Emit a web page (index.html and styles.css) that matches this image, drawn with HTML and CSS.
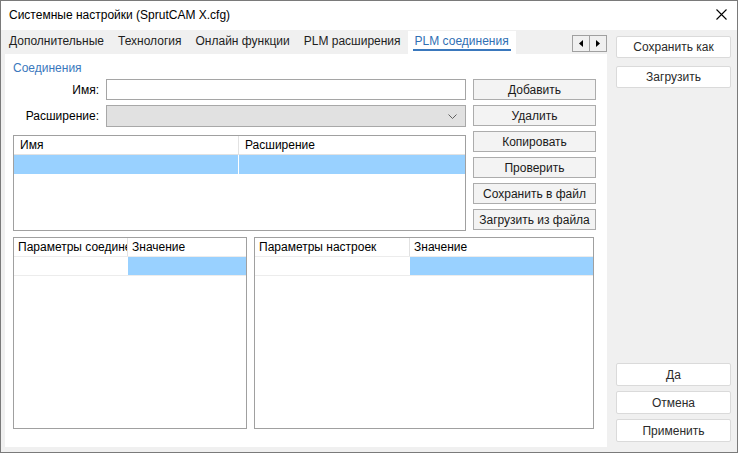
FILE: index.html
```html
<!DOCTYPE html>
<html lang="ru">
<head>
    <meta charset="UTF-8">
    <meta name="viewport" content="width=device-width, initial-scale=1.0">
    <title>Системные настройки</title>
    <link rel="stylesheet" href="styles.css">
</head>
<body>
    <div class="window">
        <div class="titlebar">
            <span class="title">Системные настройки (SprutCAM X.cfg)</span>
            <svg class="close-icon" width="11" height="11" viewBox="0 0 11 11">
                <path d="M0.5 0.5 L10.5 10.5 M10.5 0.5 L0.5 10.5" stroke="#000" stroke-width="1.1" fill="none"/>
            </svg>
        </div>

        <div class="content">
            <div class="main">
                <div class="tabbar">
                    <div class="tab"><span>Дополнительные</span></div>
                    <div class="tab"><span>Технология</span></div>
                    <div class="tab"><span>Онлайн функции</span></div>
                    <div class="tab"><span>PLM расширения</span></div>
                    <div class="tab active"><span>PLM соединения</span></div>
                    <div class="tab-scroll">
                        <button class="scroll-btn">
                            <svg width="4" height="7" viewBox="0 0 4 7"><path d="M4 0 L0 3.5 L4 7 Z" fill="#000"/></svg>
                        </button>
                        <button class="scroll-btn">
                            <svg width="4" height="7" viewBox="0 0 4 7"><path d="M0 0 L4 3.5 L0 7 Z" fill="#000"/></svg>
                        </button>
                    </div>
                </div>

                <div class="panel">
                    <div class="group-title">Соединения</div>

                    <div class="top-section">
                        <div class="form-side">
                            <div class="form-row">
                                <label class="form-label">Имя:</label>
                                <div class="text-input"></div>
                            </div>
                            <div class="form-row combo-row">
                                <label class="form-label">Расширение:</label>
                                <div class="combo">
                                    <svg width="9" height="5" viewBox="0 0 9 5"><path d="M0.5 0.5 L4.5 4.5 L8.5 0.5" stroke="#606060" fill="none"/></svg>
                                </div>
                            </div>
                            <div class="grid-table conn-table">
                                <div class="grid-row header">
                                    <div class="cell">Имя</div>
                                    <div class="cell">Расширение</div>
                                </div>
                                <div class="grid-row selected">
                                    <div class="cell"></div>
                                    <div class="cell"></div>
                                </div>
                            </div>
                        </div>

                        <div class="action-buttons">
                            <button class="btn">Добавить</button>
                            <button class="btn">Удалить</button>
                            <button class="btn">Копировать</button>
                            <button class="btn">Проверить</button>
                            <button class="btn">Сохранить в файл</button>
                            <button class="btn">Загрузить из файла</button>
                        </div>
                    </div>

                    <div class="bottom-section">
                        <div class="grid-table params-table conn-params">
                            <div class="grid-row header">
                                <div class="cell">Параметры соединения</div>
                                <div class="cell">Значение</div>
                            </div>
                            <div class="grid-row">
                                <div class="cell"></div>
                                <div class="cell value"></div>
                            </div>
                        </div>
                        <div class="grid-table params-table setting-params">
                            <div class="grid-row header">
                                <div class="cell">Параметры настроек</div>
                                <div class="cell">Значение</div>
                            </div>
                            <div class="grid-row">
                                <div class="cell"></div>
                                <div class="cell value"></div>
                            </div>
                        </div>
                    </div>
                </div>
            </div>

            <div class="side">
                <div class="side-group">
                    <button class="side-btn">Сохранить как</button>
                    <button class="side-btn">Загрузить</button>
                </div>
                <div class="side-group bottom">
                    <button class="side-btn tall">Да</button>
                    <button class="side-btn tall">Отмена</button>
                    <button class="side-btn tall">Применить</button>
                </div>
            </div>
        </div>
    </div>
</body>
</html>
```

FILE: styles.css
```css
* {
    box-sizing: border-box;
}

body {
    margin: 0;
    width: 738px;
    height: 453px;
    font-family: 'Liberation Sans', Arial, sans-serif;
    font-size: 12px;
    color: #000;
    background-color: #3a3530;
    overflow: hidden;
}

button {
    font-family: inherit;
    font-size: 12px;
    margin: 0;
    padding: 0;
    cursor: pointer;
}

.window {
    width: 738px;
    height: 453px;
    border: 1px solid #7a7a7a;
    background-color: #f0f0f0;
    display: flex;
    flex-direction: column;
}

/* title bar */
.titlebar {
    height: 29px;
    background-color: #fff;
    display: flex;
    align-items: center;
    padding-left: 8px;
    flex-shrink: 0;
}

.title {
    flex: 1;
    font-size: 12px;
    margin-top: -2px;
}

.close-icon {
    margin-right: 10px;
    margin-top: -2px;
}

.content {
    flex: 1;
    display: flex;
}

.main {
    width: 606px;
    display: flex;
    flex-direction: column;
}

/* tabs */
.tabbar {
    height: 24px;
    display: flex;
    padding-left: 1px;
    flex-shrink: 0;
}

.tab {
    margin-top: 1px;
    padding: 3px 5px 0;
    color: #1e1e1e;
}

.tab span {
    display: block;
    line-height: 14px;
    padding: 0 2px 1px;
    border-bottom: 2px solid transparent;
}

.tab.active {
    background-color: #fff;
    color: #2f6fb4;
}

.tab.active span {
    border-bottom-color: #3a78bd;
}

.tab-scroll {
    margin-left: auto;
    margin-top: 5px;
    display: flex;
    height: 17px;
}

.scroll-btn {
    width: 18px;
    height: 17px;
    background-color: #f0f0f0;
    border: 1px solid #a0a0a0;
    display: flex;
    align-items: center;
    justify-content: center;
}

.scroll-btn + .scroll-btn {
    border-left: none;
    width: 17px;
}

/* panel */
.panel {
    flex: 1;
    background-color: #fff;
    margin: 0 0 5px 4px;
    padding: 7px 10px 18px 8px;
    display: flex;
    flex-direction: column;
}

.group-title {
    color: #3a78bd;
    line-height: 14px;
    margin-bottom: 4px;
}

.top-section {
    display: grid;
    grid-template-columns: 453px 123px;
    gap: 7px;
}

.form-row {
    display: flex;
    align-items: center;
    gap: 7px;
    height: 21px;
    margin-bottom: 5px;
}

.form-row.combo-row {
    height: 22px;
    margin-bottom: 8px;
}

.form-label {
    width: 86px;
    text-align: right;
}

.text-input {
    flex: 1;
    height: 100%;
    border: 1px solid #a5a5a5;
    background-color: #fff;
}

.combo {
    flex: 1;
    height: 100%;
    border: 1px solid #a8a8a8;
    background-color: #e1e1e1;
    display: flex;
    align-items: center;
    justify-content: flex-end;
    padding-right: 8px;
}

.action-buttons {
    display: flex;
    flex-direction: column;
    gap: 5px;
}

.btn {
    height: 21px;
    background-color: #f3f3f3;
    border: 1px solid #acacac;
    color: #1a1a1a;
}

/* tables */
.grid-table {
    border: 1px solid #a0a0a0;
    background-color: #fff;
}

.conn-table {
    height: 96px;
}

.grid-row {
    display: grid;
    height: 19px;
}

.grid-row.header {
    height: 19px;
    border-bottom: 1px solid #e2e2e2;
}

.cell {
    white-space: nowrap;
    overflow: hidden;
    line-height: 18px;
    padding-left: 4px;
}

.grid-row.header .cell {
    border-right: 1px solid #e2e2e2;
}

.grid-row.header .cell:last-child {
    border-right: none;
}

.conn-table .grid-row {
    grid-template-columns: 225px 1fr;
}

.conn-table .cell {
    padding-left: 6px;
}

.conn-table .grid-row.selected .cell {
    background-color: #99d1ff;
    border-right: 1px solid #fff;
}

.conn-table .grid-row.selected .cell:last-child {
    border-right: none;
}

.bottom-section {
    flex: 1;
    display: flex;
    gap: 7px;
    margin-top: 6px;
}

.params-table .grid-row {
    border-bottom: 1px solid #ececec;
}

.conn-params {
    width: 234px;
}

.conn-params .grid-row {
    grid-template-columns: 114px 1fr;
}

.setting-params {
    width: 340px;
}

.setting-params .grid-row {
    grid-template-columns: 155px 1fr;
}

.params-table .cell.value {
    background-color: #99d1ff;
}

/* right column */
.side {
    flex: 1;
    display: flex;
    flex-direction: column;
    justify-content: space-between;
    padding: 6px 6px 10px 9px;
}

.side-group {
    display: flex;
    flex-direction: column;
    gap: 8px;
}

.side-group.bottom {
    gap: 5px;
}

.side-btn {
    width: 115px;
    height: 22px;
    background-color: #fff;
    border: 1px solid #dadada;
    border-radius: 2px;
    color: #2a2a2a;
}

.side-btn.tall {
    height: 23px;
}
```
